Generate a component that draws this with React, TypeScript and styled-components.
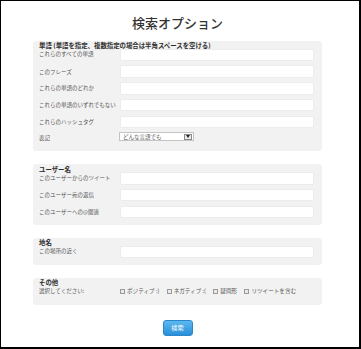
import React from "react";
import styled, { createGlobalStyle } from "styled-components";

const Global = createGlobalStyle`
  html, body { margin: 0; padding: 0; background: #fff; }
  body { font-family: "Noto Sans CJK JP", "Noto Sans", sans-serif; }
  * { box-sizing: border-box; }
`;

const Frame = styled.div`
  width: 361px;
  height: 349px;
  border-style: solid;
  border-color: #000;
  border-width: 1px 2px 2px 1px;
  background: #fff;
  overflow: hidden;
`;

const Container = styled.div`
  width: 289px;
  margin-left: 32px;
  display: flex;
  flex-direction: column;
`;

const Title = styled.h1`
  margin: 15px 0 11.7px;
  font-size: 13px;
  line-height: 13px;
  font-weight: 500;
  color: #333;
  text-align: center;
`;

const Panel = styled.section`
  background: #f2f2f2;
  border-radius: 3px;
  padding: 2.5px 8px 7px 6px;
  display: flex;
  flex-direction: column;
  gap: 4.25px;
  & + & {
    margin-top: 12.6px;
  }
`;

const Row = styled.div<{ $lead?: boolean; $h?: number }>`
  display: flex;
  align-items: ${(p) => (p.$lead ? "flex-end" : "center")};
  height: ${(p) => (p.$lead ? 18 : p.$h ?? 12.5)}px;
`;

const LabelCell = styled.div`
  width: 81px;
  flex: none;
  display: flex;
  flex-direction: column;
`;

const Heading = styled.div`
  font-size: 6.4px;
  line-height: 5px;
  font-weight: 700;
  color: #2e2e2e;
  white-space: nowrap;
`;

const Label = styled.div<{ $lead?: boolean }>`
  font-size: 5.5px;
  line-height: 12px;
  color: #555;
  white-space: nowrap;
  margin-bottom: ${(p) => (p.$lead ? 1 : 0)}px;
`;

const TextInput = styled.div`
  flex: 1;
  height: 12.5px;
  background: #fff;
  border: 1px solid #ececec;
  border-radius: 1px;
`;

const SelectBox = styled.div`
  width: 75px;
  height: 9px;
  margin-left: -1px;
  align-self: flex-start;
  background: #fff;
  border: 1px solid #c4c4c4;
  display: flex;
  align-items: center;
  justify-content: space-between;
  padding: 0 1px 0 3px;
  font-size: 5.5px;
  color: #555;
  white-space: nowrap;
`;

const SelectArrow = styled.span`
  width: 8px;
  height: 6px;
  border: 1px solid #8a8a8a;
  background: #ececec;
  display: flex;
  align-items: center;
  justify-content: center;
`;

const Checks = styled.div`
  display: flex;
  align-items: center;
  gap: 7.3px;
  height: 12px;
  margin-bottom: 1px;
`;

const CheckItem = styled.label`
  display: flex;
  align-items: center;
  gap: 2px;
  font-size: 5.6px;
  color: #555;
  white-space: nowrap;
`;

const Box = styled.span`
  width: 5px;
  height: 5px;
  border: 1px solid #9a9a9a;
  background: #e9e9e9;
  flex: none;
`;

const Button = styled.button`
  align-self: center;
  margin-top: 15px;
  width: 30px;
  height: 15.7px;
  padding: 0;
  border: 1px solid #2b87cc;
  border-radius: 3px;
  background: linear-gradient(#5cb8ef, #2a8fd9);
  color: #fff;
  font-family: "Noto Sans CJK JP", sans-serif;
  font-size: 6.2px;
  line-height: 1;
`;

type Field = { label: string };

const wordRows: Field[] = [
  { label: "このフレーズ" },
  { label: "これらの単語のどれか" },
  { label: "これらの単語のいずれでもない" },
  { label: "これらのハッシュタグ" },
];

const userRows: Field[] = [
  { label: "このユーザー宛の返信" },
  { label: "このユーザーへの@関連" },
];

const checks = ["ポジティブ :)", "ネガティブ :(", "疑問形", "リツイートを含む"];

export default function App() {
  return (
    <Frame>
      <Global />
      <Container>
        <Title>検索オプション</Title>

        <Panel>
          <Row $lead>
            <LabelCell>
              <Heading>単語 (単語を指定、複数指定の場合は半角スペースを空ける)</Heading>
              <Label $lead>これらのすべての単語</Label>
            </LabelCell>
            <TextInput />
          </Row>
          {wordRows.map((r) => (
            <Row key={r.label}>
              <LabelCell>
                <Label>{r.label}</Label>
              </LabelCell>
              <TextInput />
            </Row>
          ))}
          <Row $h={12}>
            <LabelCell>
              <Label>表記</Label>
            </LabelCell>
            <SelectBox>
              どんな言語でも
              <SelectArrow>
                <svg width="4" height="3" viewBox="0 0 4 3">
                  <path d="M0 0H4L2 3Z" fill="#222" />
                </svg>
              </SelectArrow>
            </SelectBox>
          </Row>
        </Panel>

        <Panel>
          <Row $lead>
            <LabelCell>
              <Heading>ユーザー名</Heading>
              <Label $lead>このユーザーからのツイート</Label>
            </LabelCell>
            <TextInput />
          </Row>
          {userRows.map((r) => (
            <Row key={r.label}>
              <LabelCell>
                <Label>{r.label}</Label>
              </LabelCell>
              <TextInput />
            </Row>
          ))}
        </Panel>

        <Panel>
          <Row $lead>
            <LabelCell>
              <Heading>地名</Heading>
              <Label $lead>この場所の近く</Label>
            </LabelCell>
            <TextInput />
          </Row>
        </Panel>

        <Panel>
          <Row $lead>
            <LabelCell>
              <Heading>その他</Heading>
              <Label $lead>選択してください:</Label>
            </LabelCell>
            <Checks>
              {checks.map((c) => (
                <CheckItem key={c}>
                  <Box />
                  {c}
                </CheckItem>
              ))}
            </Checks>
          </Row>
        </Panel>

        <Button>検索</Button>
      </Container>
    </Frame>
  );
}
